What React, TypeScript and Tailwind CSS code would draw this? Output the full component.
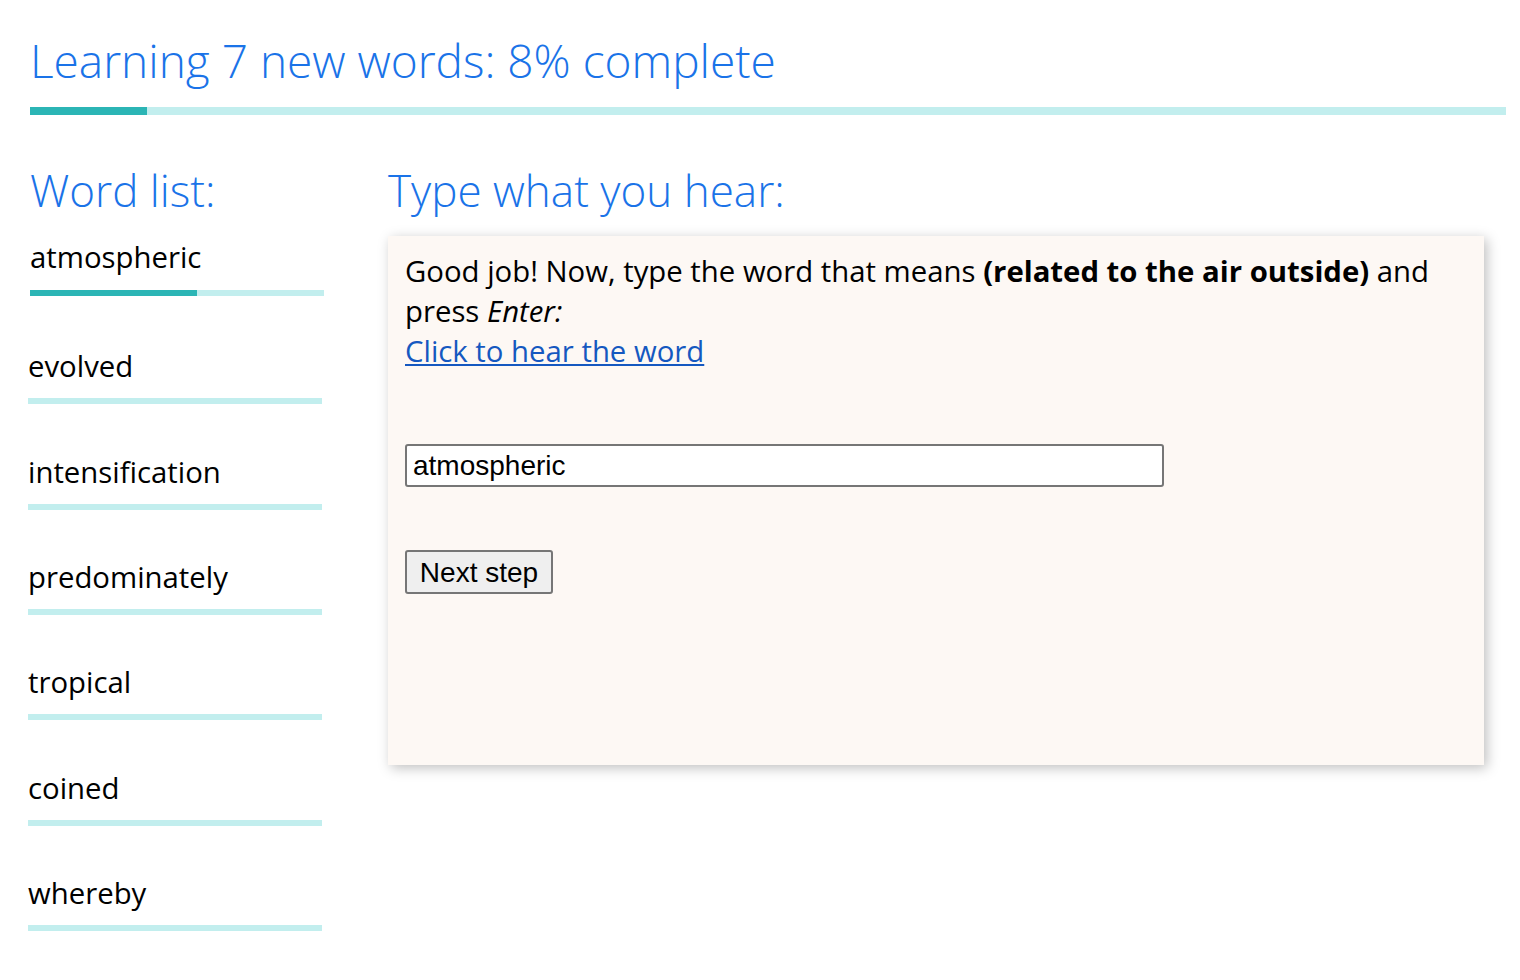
import React from "react";

const words = ["atmospheric", "evolved", "intensification", "predominately", "tropical", "coined", "whereby"];

export default function App() {
  return (
    <div className="min-h-[980px] bg-white pl-[30px] pr-[14px] pt-[28px]" style={{ fontFamily: '"Open Sans", sans-serif' }}>
      <h1 className="text-[46px] font-light leading-[64px] text-[#1a73e8]">Learning 7 new words: 8% complete</h1>
      <div className="mt-[15px] flex h-[8px] w-[1476px] bg-[#c2eeee]">
        <div className="h-full w-[117px] bg-[#2bb5b5]" />
      </div>
      <div className="mt-[45px] flex">
        <div className="w-[294px]">
          <h2 className="text-[44px] font-light leading-[60px] text-[#1a73e8]">Word list:</h2>
          <div className="mt-[17px] flex flex-col">
            {words.map((w, i) => (
              <div key={w} className={i === 0 ? "mb-[3px]" : "-ml-[2px] mt-[47.33px]"}>
                <div className="text-[29.33px] leading-[40px] text-black">{w}</div>
                <div className={`${i === 0 ? "mt-[13px]" : "mt-[12px]"} flex h-[6px] w-[294px] bg-[#c2eeee]`}>
                  {i === 0 && <div className="h-full w-[167px] bg-[#2bb5b5]" />}
                </div>
              </div>
            ))}
          </div>
        </div>
        <div className="ml-[64px] flex-1">
          <h2 className="text-[44px] font-light leading-[60px] text-[#1a73e8]">Type what you hear:</h2>
          <div className="mt-[16px] h-[529px] w-[1096px] bg-[#fdf8f4] px-[17px] pt-[15px] shadow-[3px_3px_12px_rgba(0,0,0,0.25)]">
            <p className="text-[29.33px] leading-[40px] text-black">
              Good job! Now, type the word that means <b>(related to the air outside)</b> and press <i>Enter:</i>
            </p>
            <a href="#" className="text-[29.33px] leading-[40px] text-[#1558c0] underline">Click to hear the word</a>
            <div className="mt-[73px]">
              <input
                readOnly
                value="atmospheric"
                className="h-[43px] w-[759px] rounded-[3px] border-2 border-[#767676] bg-white px-[6px] text-[28px] text-black"
                style={{ fontFamily: '"Liberation Sans", Arial, sans-serif' }}
              />
            </div>
            <button
              className="mt-[63px] h-[44px] w-[148px] rounded-[3px] border-2 border-[#767676] bg-[#efefef] text-[28px] text-black"
              style={{ fontFamily: '"Liberation Sans", Arial, sans-serif' }}
            >
              Next step
            </button>
          </div>
        </div>
      </div>
    </div>
  );
}
